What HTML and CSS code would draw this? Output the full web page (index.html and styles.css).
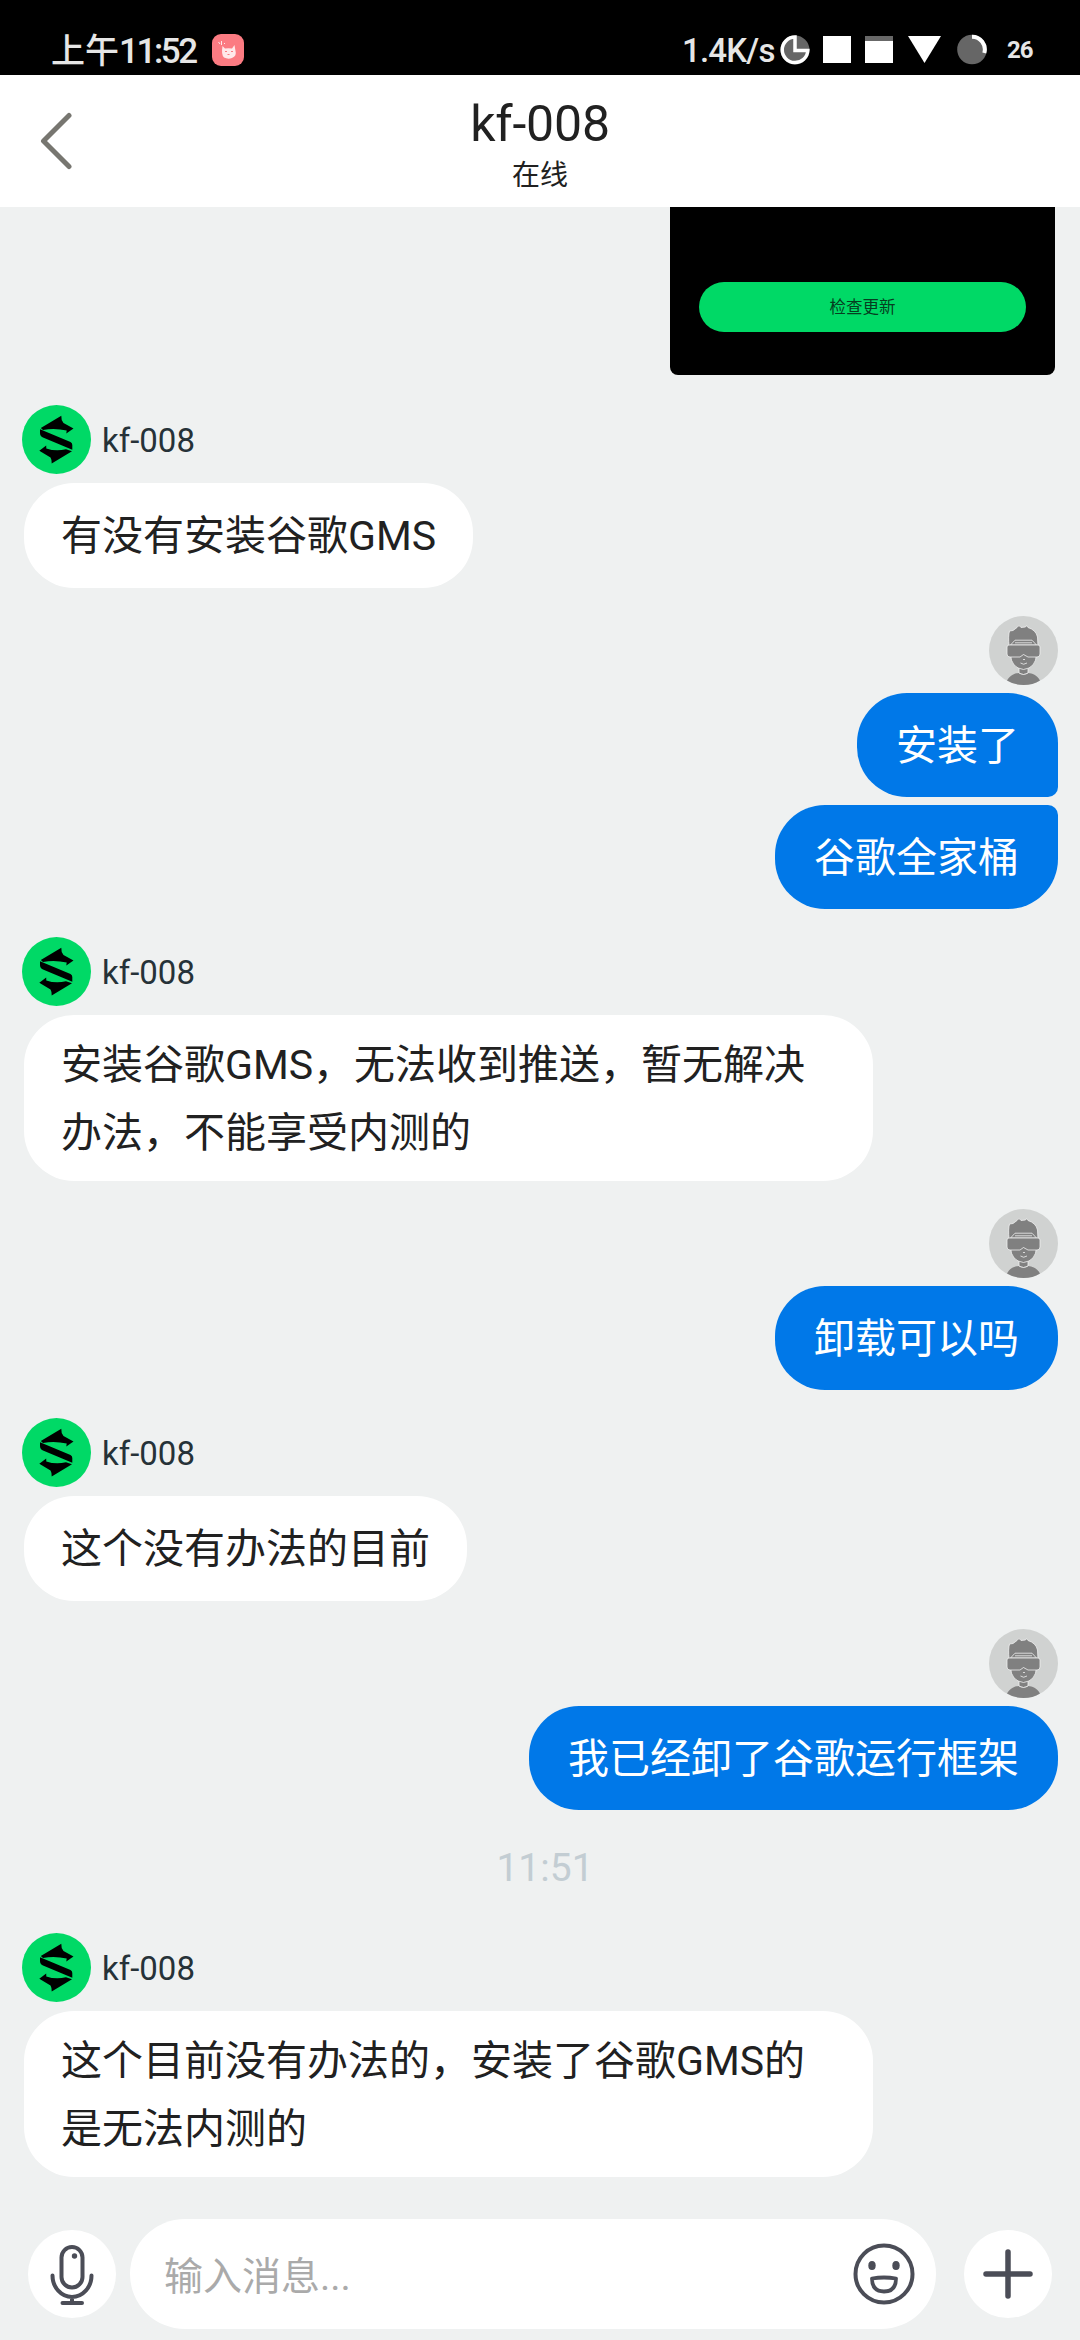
FILE: index.html
```html
<!DOCTYPE html>
<html lang="zh-CN">
<head>
<meta charset="utf-8">
<title>kf-008</title>
<link rel="stylesheet" href="styles.css">
</head>
<body>
<svg class="defs" width="0" height="0" aria-hidden="true">
  <symbol id="agent" viewBox="0 0 69 69">
    <circle cx="34.5" cy="34.5" r="34.5" fill="#00d966"/>
    <path d="M18.800 23L39.300 10.700Q39 15 41.500 18L51.500 23.500 44.300 28.500 44.700 25.600Q33 22.700 21 24.900ZM18 24.200L48.500 37Q50.300 38 50.300 40V44.800L21 32.500Q18 31 18 28ZM17.300 45.800L24.200 40.500 24.300 43.500Q34 46.800 44 44.200L50 46.300 29.700 58.500Q30 55 28.500 52.500Z" fill="#000"/>
  </symbol>
  <symbol id="guest" viewBox="0 0 69 69">
    <circle cx="34.500" cy="34.500" r="34.500" fill="#d0d2d1"/>
    <path d="M18 64.500C21 59 26 57.300 29.500 57Q34.500 61 39.500 57C43 57.300 48 59 51 64.500Q44 69 34.500 69T18 64.500Z" fill="#808080"/>
    <g fill="#808080" stroke="#f0f0f0" stroke-width=".8" stroke-linejoin="round">
      <path d="M30 50H39V57Q34.500 60 30 57Z"/>
      <path d="M21.500 38Q22 52 34.500 53.500 47 52 47.500 38Z"/>
      <path d="M20 30Q19 20 20.500 15L24 14.500 28 11.500 30 9.500 32 11.500 36.500 11 37.500 9.500 39 11.500Q47 14 48.500 21L49 30Z"/>
      <path d="M21.500 29L26 24.200H43L47.500 29Z"/>
      <path d="M26 26.800H43"/>
      <path d="M20 29H49Q51 29 51 31V38Q51 41 48 41H39L34.500 38.500 31 41H21Q18 41 18 38V31Q18 29 20 29Z"/>
      <path d="M34 43.500h2M31.500 47q3 2.500 6.500 0" fill="none"/>
    </g>
  </symbol>
</svg>

<div class="status">
  <span class="status-time">上午<span class="digits">11:52</span></span>
  <svg class="app-badge" viewBox="0 0 32 32">
    <rect width="32" height="32" rx="9" fill="#fb7b82"/>
    <path d="M10.500 12L13 14.500Q16.500 14 20 14.500L22.500 11 23.500 17Q25 22 20 24Q16 25.500 12 23.500Q9 21 10.500 12Z" fill="#ffe9ea"/>
    <path d="M6.500 8l1.500 2M9.500 7v4M12 9.500h1" stroke="#ffe9ea" fill="none"/>
    <path d="M13 17.500h2M19 17.500h2M15.500 20.500h2" stroke="#fb7b82" fill="none"/>
  </svg>
  <span class="status-speed">1.4K/s</span>
  <svg class="status-icons" viewBox="0 0 208 32">
    <circle cx="15" cy="16" r="14.500" fill="#666"/>
    <path d="M15 3A12.800 12.800 0 1 0 27.800 16.500H15Z" fill="none" stroke="#fff" stroke-width="3.500"/>
    <rect x="43" y="2" width="28" height="27" fill="#fff"/>
    <rect x="85" y="2" width="28" height="27" fill="#fff"/>
    <rect x="85" y="2" width="28" height="5" fill="#686868"/>
    <path d="M128 2H161L144.500 29Z" fill="#fff"/>
    <circle cx="192" cy="15.500" r="14.800" fill="#666"/>
    <path d="M192 2.700A12.800 12.800 0 0 1 204.300 19" fill="none" stroke="#fff" stroke-width="4"/>
  </svg>
  <span class="status-battery">26</span>
</div>

<header class="header">
  <svg class="back" viewBox="0 0 34 58"><path d="M30 3.500L4.500 29 30 54.500" fill="none" stroke="#777670" stroke-width="5" stroke-linecap="round" stroke-linejoin="round"/></svg>
  <div class="heading">
    <h1 class="title">kf-008</h1>
    <p class="state">在线</p>
  </div>
</header>

<main class="chat">
  <div class="shot"><div class="shot-button">检查更新</div></div>

  <section class="group">
    <div class="who"><svg class="avatar"><use href="#agent"/></svg><span class="name">kf-008</span></div>
    <p class="bubble">有没有安装谷歌GMS</p>
  </section>

  <section class="group mine">
    <svg class="avatar"><use href="#guest"/></svg>
    <p class="bubble first">安装了</p>
    <p class="bubble last">谷歌全家桶</p>
  </section>

  <section class="group">
    <div class="who"><svg class="avatar"><use href="#agent"/></svg><span class="name">kf-008</span></div>
    <p class="bubble long">安装谷歌GMS，无法收到推送，暂无解决<br>办法，不能享受内测的</p>
  </section>

  <section class="group mine">
    <svg class="avatar"><use href="#guest"/></svg>
    <p class="bubble">卸载可以吗</p>
  </section>

  <section class="group">
    <div class="who"><svg class="avatar"><use href="#agent"/></svg><span class="name">kf-008</span></div>
    <p class="bubble">这个没有办法的目前</p>
  </section>

  <section class="group mine">
    <svg class="avatar"><use href="#guest"/></svg>
    <p class="bubble">我已经卸了谷歌运行框架</p>
  </section>

  <time class="stamp">11:51</time>

  <section class="group">
    <div class="who"><svg class="avatar"><use href="#agent"/></svg><span class="name">kf-008</span></div>
    <p class="bubble long">这个目前没有办法的，安装了谷歌GMS的<br>是无法内测的</p>
  </section>
</main>

<footer class="composer">
  <div class="round">
    <svg viewBox="0 0 88 88" fill="none" stroke="#4b4d57" stroke-width="4" stroke-linecap="round">
      <rect x="33.500" y="17" width="21" height="40.500" rx="10.500"/>
      <circle cx="46.500" cy="26" r="2.700" fill="#4b4d57" stroke="none"/>
      <path d="M24.500 45.500A19.500 21.500 0 0 0 63.500 45.500M44 67V73M34.500 73H54"/>
    </svg>
  </div>
  <div class="field">
    <span class="placeholder">输入消息...</span>
    <svg class="smile" viewBox="0 0 62 62" fill="none" stroke="#4b4d57" stroke-width="4">
      <circle cx="31" cy="31" r="28.500"/>
      <ellipse cx="19" cy="22.500" rx="3.700" ry="4.500" fill="#4b4d57" stroke="none"/>
      <ellipse cx="43" cy="22.500" rx="3.700" ry="4.500" fill="#4b4d57" stroke="none"/>
      <path d="M19 35.500Q31 33.500 43 35.500Q43 48.500 31 48.500T19 35.500Z" stroke-width="3.800" stroke-linejoin="round"/>
    </svg>
  </div>
  <div class="round">
    <svg viewBox="0 0 88 88" fill="none" stroke="#4b4d57" stroke-width="5.500" stroke-linecap="round"><path d="M22 44H66M44 22V66"/></svg>
  </div>
</footer>
</body>
</html>
```
FILE: styles.css
```css
* { box-sizing: border-box; margin: 0; }

body {
  display: flex;
  flex-direction: column;
  width: 1080px;
  height: 2340px;
  overflow: hidden;
  background: #eff1f1;
  color: #212121;
  font-family: Roboto, "Noto Sans CJK SC", sans-serif;
}

.defs { display: none; }

.status {
  display: flex;
  flex: none;
  align-items: center;
  height: 75px;
  padding: 25px 48px 0 51px;
  background: #000;
  color: #e6e6e6;
  font-weight: 500;
  white-space: nowrap;
}
.status-time { width: 161px; padding-bottom: 3px; font-size: 34px; }
.digits { font-size: 35px; letter-spacing: -2.4px; }
.app-badge { width: 32px; height: 32px; }
.status-speed { width: 98px; margin-left: auto; font-size: 33px; letter-spacing: -.8px; }
.status-icons { width: 208px; height: 32px; }
.status-battery { width: 25px; margin-left: 19px; font-size: 24px; font-weight: 700; letter-spacing: -1px; }

.header {
  display: grid;
  grid-template-columns: 160px 1fr 160px;
  flex: none;
  height: 132px;
  background: #fff;
}
.back { width: 34px; height: 58px; margin: 37px 0 0 39px; }
.heading { padding-top: 20px; text-align: center; }
.title { font-size: 50px; font-weight: 400; line-height: 58px; letter-spacing: -.2px; }
.state { margin-top: 3px; font-size: 28px; line-height: 40px; }

.chat { display: flex; flex: 1; flex-direction: column; padding: 0 22px; }

.shot {
  display: flex;
  flex-direction: column;
  align-self: flex-end;
  width: 385px;
  height: 168px;
  margin: 0 3px 2px 0;
  padding: 75px 29px 0;
  border-radius: 0 0 8px 8px;
  background: #000;
}
.shot-button {
  height: 50px;
  border-radius: 25px;
  background: #00d966;
  color: #063d20;
  font-size: 16.500px;
  line-height: 52px;
  text-align: center;
}

.group { display: flex; flex-direction: column; align-items: flex-start; margin-top: 28px; }
.mine { align-items: flex-end; }
.who { display: flex; align-items: center; gap: 11px; }
.avatar { display: block; width: 69px; height: 69px; }
.name { padding-top: 2px; color: #263238; font-size: 33px; }

.bubble {
  min-height: 105px;
  margin: 9px 0 0 2px;
  padding: 20px 37px 0;
  border-radius: 50px;
  background: #fff;
  font-size: 41px;
  line-height: 67.5px;
  white-space: nowrap;
}
.long { width: 849px; height: 166px; padding-top: 17px; }
.mine .bubble {
  min-height: 104px;
  margin-top: 8px;
  padding-right: 39px;
  padding-left: 39px;
  background: #0078e8;
  color: #fff;
}
.mine .first { border-bottom-right-radius: 10px; }
.mine .last { border-top-right-radius: 10px; }

.stamp { margin: 30px 0 9px 10px; color: #c3cdd3; font-size: 39px; line-height: 56px; text-align: center; }

.composer {
  display: flex;
  flex: none;
  align-items: center;
  height: 120px;
  margin-bottom: 6px;
  padding: 0 28px;
}
.round { flex: none; width: 88px; height: 88px; border-radius: 50%; background: #fff; }
.round svg { display: block; width: 88px; height: 88px; }
.field {
  display: flex;
  flex: 1;
  align-items: center;
  justify-content: space-between;
  height: 110px;
  margin: 0 28px 0 14px;
  padding: 0 21px 0 34px;
  border-radius: 55px;
  background: #fff;
}
.placeholder { padding-bottom: 3px; color: #aaa; font-size: 39px; }
.smile { width: 62px; height: 62px; }
```
